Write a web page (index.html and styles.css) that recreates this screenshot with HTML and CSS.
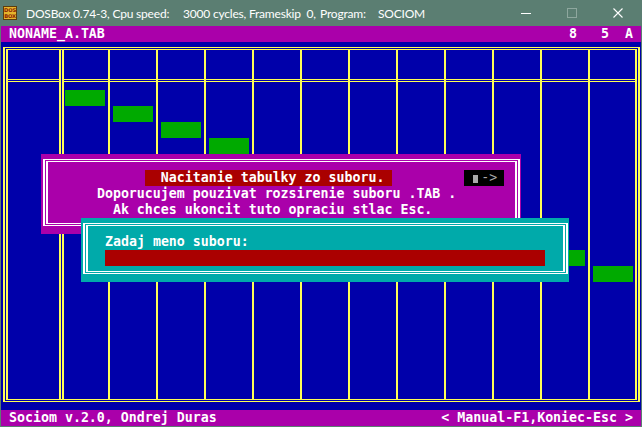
FILE: index.html
```html
<!DOCTYPE html>
<html>
<head>
<meta charset="utf-8">
<link rel="stylesheet" href="styles.css">
</head>
<body>
<div class="window">
  <div class="titlebar">
    <svg class="appicon" viewBox="0 0 14 14" width="14" height="14">
      <rect x="0.5" y="0.5" width="13" height="13" fill="#e6b52c" stroke="#5c3d0c"/>
      <text x="7" y="6.2" text-anchor="middle" font-family="DejaVu Sans" font-weight="bold" font-size="5.2" fill="#8c1e02">DOS</text>
      <text x="7" y="12" text-anchor="middle" font-family="DejaVu Sans" font-weight="bold" font-size="5.2" fill="#8c1e02">BOX</text>
    </svg>
    <div class="title">
      <span class="t1">DOSBox 0.74-3, Cpu speed:</span>
      <span class="t2">3000 cycles, Frameskip  0,</span>
      <span class="t3">Program:</span>
      <span class="t4">SOCIOM</span>
    </div>
    <div class="controls">
      <div class="ctl"><svg width="10" height="10" viewBox="0 0 10 10"><line x1="0" y1="5.5" x2="10" y2="5.5" stroke="#ffffff" stroke-width="1"/></svg></div>
      <div class="ctl"><svg width="10" height="10" viewBox="0 0 10 10"><rect x="0.5" y="0.5" width="9" height="9" fill="none" stroke="#8ea79e" stroke-width="1"/></svg></div>
      <div class="ctl"><svg width="10" height="10" viewBox="0 0 10 10"><path d="M0.5 0.5L9.5 9.5M9.5 0.5L0.5 9.5" stroke="#ffffff" stroke-width="1.1" fill="none"/></svg></div>
    </div>
  </div>

  <div class="screen">
    <div class="dosbar"><span class="pre">NONAME_A.TAB</span><span class="pre">8   5  A</span></div>

    <div class="table-area">
      <div class="frame-outer">
        <div class="frame-inner">
          <div class="col col-a"><div class="head"></div><div class="sep"></div></div>
          <div class="col col-b"><div class="head"></div><div class="sep"></div><div class="gbar" style="--row:0"></div></div>
          <div class="col col-m"><div class="head"></div><div class="sep"></div><div class="gbar" style="--row:1"></div></div>
          <div class="col col-m"><div class="head"></div><div class="sep"></div><div class="gbar" style="--row:2"></div></div>
          <div class="col col-m"><div class="head"></div><div class="sep"></div><div class="gbar" style="--row:3"></div></div>
          <div class="col col-m"><div class="head"></div><div class="sep"></div><div class="gbar" style="--row:4"></div></div>
          <div class="col col-m"><div class="head"></div><div class="sep"></div><div class="gbar" style="--row:5"></div></div>
          <div class="col col-m"><div class="head"></div><div class="sep"></div><div class="gbar" style="--row:6"></div></div>
          <div class="col col-m"><div class="head"></div><div class="sep"></div><div class="gbar" style="--row:7"></div></div>
          <div class="col col-m"><div class="head"></div><div class="sep"></div><div class="gbar" style="--row:8"></div></div>
          <div class="col col-m"><div class="head"></div><div class="sep"></div><div class="gbar" style="--row:9"></div></div>
          <div class="col col-m"><div class="head"></div><div class="sep"></div><div class="gbar" style="--row:10"></div></div>
          <div class="col col-z"><div class="head"></div><div class="sep"></div><div class="gbar" style="--row:11"></div></div>
        </div>
      </div>
    </div>

    <div class="dosbar"><span class="pre">Sociom v.2.0, Ondrej Duras</span><span class="pre">&lt; Manual-F1,Koniec-Esc &gt;</span></div>

    <div class="dialog d1">
      <div class="box-outer">
        <div class="box-inner">
          <div class="line pre">            <span class="hl">  Nacitanie tabulky zo suboru. </span>         <span class="btn"> <span class="blk"></span><span class="arrow">-&gt;</span> </span></div>
          <div class="line pre">      Doporucujem pouzivat rozsirenie suboru .TAB .</div>
          <div class="line pre">        Ak chces ukoncit tuto opraciu stlac Esc.</div>
        </div>
      </div>
    </div>

    <div class="dialog d2">
      <div class="box-outer">
        <div class="box-inner">
          <div class="line pre">  Zadaj meno suboru:</div>
          <div class="line pre">  <span class="input"></span></div>
        </div>
      </div>
    </div>
  </div>
</div>
</body>
</html>
```

FILE: styles.css
```css
* {
  box-sizing: border-box;
  margin: 0;
  padding: 0;
}

html,
body {
  width: 642px;
  height: 427px;
  overflow: hidden;
  background: #5b7e72;
}

.window {
  width: 642px;
  height: 427px;
  background: #5b7e72;
  display: flex;
  flex-direction: column;
}

/* ---------- title bar ---------- */
.titlebar {
  height: 26px;
  display: flex;
  align-items: center;
  color: #ffffff;
  font-family: Lato, "Open Sans", sans-serif;
  font-size: 12px;
  letter-spacing: -0.2px;
}

.appicon {
  margin-left: 3px;
  margin-right: 9px;
  flex: none;
}

.title {
  display: flex;
  flex: 1;
}

.title span {
  white-space: pre;
  flex: none;
}

.t1 { width: 157px; }
.t2 { width: 137px; }
.t3 { width: 58px; }

.controls {
  display: flex;
  height: 26px;
  margin-right: 1px;
}

.ctl {
  width: 46px;
  display: flex;
  align-items: center;
  justify-content: center;
}

.ctl svg { display: block; }

/* ---------- DOS screen ---------- */
.screen {
  position: relative;
  width: 640px;
  height: 400px;
  margin-left: 1px;
  background: #0000aa;
  display: flex;
  flex-direction: column;
  font-family: "DejaVu Sans Mono", "Liberation Mono", monospace;
  font-weight: bold;
  font-size: 13.2877px;
  line-height: 16px;
  color: #ffffff;
}

.pre { white-space: pre; }

.dosbar {
  height: 16px;
  flex: none;
  background: #aa00aa;
  display: flex;
  justify-content: space-between;
  padding: 0 8px;
}

/* table frame */
.table-area {
  height: 368px;
  flex: none;
  padding: 5px 1px 8px 2px;
}

.frame-outer {
  height: 100%;
  border: solid #ffff55;
  border-width: 1px 2px;
  padding: 1px;
}

.frame-inner {
  height: 100%;
  border: solid #ffff55;
  border-width: 1px 2px;
  display: flex;
}

.col {
  display: flex;
  flex-direction: column;
  flex: none;
}

.col-a {
  width: 53px;
  border-right: 2px solid #ffff55;
  margin-right: 1px;
}

.col-b {
  width: 48px;
  border-left: 2px solid #ffff55;
  border-right: 2px solid #ffff55;
}

.col-m {
  width: 48px;
  border-right: 2px solid #ffff55;
}

.col-z { width: 45px; }

.head { height: 29px; }

.sep {
  height: 3px;
  border-top: 1px solid #ffff55;
  border-bottom: 1px solid #ffff55;
}

.gbar {
  width: 40px;
  height: 16px;
  background: #00aa00;
  margin-left: 3px;
  margin-top: calc(8px + var(--row) * 16px);
}

.col-b .gbar { margin-left: 1px; }

/* dialogs */
.dialog {
  position: absolute;
  padding: 5px 1px 8px 2px;
}

.d1 {
  left: 40px;
  top: 128px;
  width: 480px;
  height: 80px;
  background: #aa00aa;
}

.d2 {
  left: 80px;
  top: 192px;
  width: 488px;
  height: 64px;
  background: #00aaaa;
}

.box-outer {
  height: 100%;
  border: solid #ffffff;
  border-width: 1px 2px;
  padding: 1px;
}

.box-inner {
  height: 100%;
  border: solid #ffffff;
  border-width: 1px 2px;
  padding: 8px 0 0 1px;
}

.line { height: 16px; }

.hl {
  display: inline-block;
  background: #aa0000;
  height: 16px;
  vertical-align: top;
}

.btn {
  display: inline-block;
  width: 40px;
  height: 16px;
  background: #000000;
  color: #aaaaaa;
  vertical-align: top;
}

.blk {
  display: inline-block;
  width: 5px;
  height: 8px;
  margin: 0 3px 0 1px;
  background: #aaaaaa;
  vertical-align: -1px;
}

.arrow { font-weight: normal; }

.input {
  display: inline-block;
  width: 440px;
  height: 16px;
  background: #aa0000;
  vertical-align: top;
}
```
